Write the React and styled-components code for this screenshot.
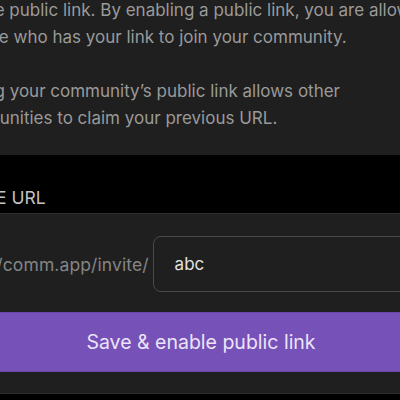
import React from 'react'
import styled, { createGlobalStyle } from 'styled-components'

const GlobalStyle = createGlobalStyle`
  html, body {
    margin: 0;
    padding: 0;
    background: #000;
    overflow: hidden;
  }
  body {
    font-family: Inter, "Noto Sans", "Liberation Sans", sans-serif;
    -webkit-font-smoothing: antialiased;
  }
`

const Screen = styled.div`
  width: 502px;
  margin-left: -50px;
  margin-top: -30px;
  display: flex;
  flex-direction: column;
`

const Intro = styled.div`
  background: #1f1f1f;
  padding-bottom: 23px;
`

const Line = styled.div`
  color: #9a9a9a;
  font-size: 17px;
  line-height: 27px;
  white-space: nowrap;
  min-height: 27px;
`

const SectionHeader = styled.div`
  background: #000;
  padding: 33px 0 5px;
  color: #c4c4c4;
  font-size: 17.5px;
  line-height: 20px;
  text-transform: uppercase;
`

const Section = styled.div`
  background: #1f1f1f;
  border-top: 1px solid #2f2f2f;
  border-bottom: 1px solid #2f2f2f;
  padding: 22px 0 21px;
  display: flex;
  flex-direction: column;
  gap: 20px;
`

const InviteRow = styled.div`
  display: flex;
  align-items: center;
  gap: 4px;
`

const Prefix = styled.span`
  color: #858585;
  font-size: 17.5px;
  letter-spacing: 0.1px;
  white-space: nowrap;
  margin-left: -7px;
`

const LinkInput = styled.div`
  flex: 1;
  height: 54px;
  border: 1px solid #4a4a4a;
  border-radius: 8px;
  display: flex;
  align-items: center;
  padding-left: 21px;
  color: #e2e2e2;
  font-size: 17px;
`

const PrimaryButton = styled.button`
  height: 60px;
  background: #7651b8;
  border: none;
  border-top: 1px solid #6a48a8;
  border-bottom: 1px solid #6a48a8;
  border-radius: 0;
  color: #ece4f8;
  font-family: inherit;
  font-size: 19.5px;
  cursor: pointer;
`

const intro = [
  'Let your community be more accessible with your own',
  'unique public link. By enabling a public link, you are allowing',
  'anyone who has your link to join your community.',
  '',
  'Editing your community\u2019s public link allows other',
  'communities to claim your previous URL.',
]

export default function App() {
  return (
    <>
      <GlobalStyle />
      <Screen>
        <Intro>
          {intro.map((text, i) => (
            <Line key={i}>{text}</Line>
          ))}
        </Intro>
        <SectionHeader>Invite URL</SectionHeader>
        <Section>
          <InviteRow>
            <Prefix>https://comm.app/invite/</Prefix>
            <LinkInput>abc</LinkInput>
          </InviteRow>
          <PrimaryButton>Save &amp; enable public link</PrimaryButton>
        </Section>
      </Screen>
    </>
  )
}
